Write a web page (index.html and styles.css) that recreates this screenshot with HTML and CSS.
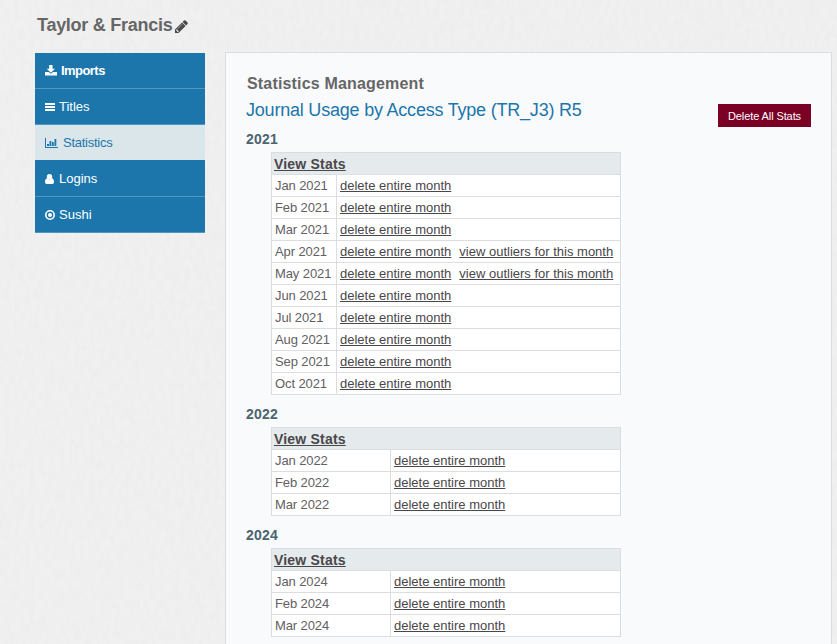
FILE: index.html
```html
<!DOCTYPE html>
<html lang="en">
<head>
<meta charset="utf-8">
<title>Taylor &amp; Francis</title>
<link rel="stylesheet" href="styles.css">
</head>
<body>
<svg class="paper" width="837" height="644" aria-hidden="true">
  <filter id="grain" x="0" y="0" width="100%" height="100%">
    <feTurbulence type="fractalNoise" baseFrequency="0.2 0.1" numOctaves="3" seed="4"/>
    <feColorMatrix values="0 0 0 0 .45  0 0 0 0 .45  0 0 0 0 .45  .1 0 0 0 -.035"/>
  </filter>
  <rect width="837" height="644" filter="url(#grain)"/>
</svg>
<div class="page">
  <h1 class="title"><span>Taylor &amp; Francis</span>
    <svg class="pencil" viewBox="0 -1408 1536 1536"><path transform="scale(1,-1)" d="M363 0l91 91l-235 235l-91 -91v-107h128v-128h107zM886 928q0 22 -22 22q-10 0 -17 -7l-542 -542q-7 -7 -7 -17q0 -22 22 -22q10 0 17 7l542 542q7 7 7 17zM832 1120l416 -416l-832 -832h-416v416zM1515 1024q0 -53 -37 -90l-166 -166l-416 416l166 165q36 38 90 38q53 0 91 -38l235 -234q37 -39 37 -91z"/></svg>
  </h1>
  <div class="columns">
    <nav class="menu">
      <a class="item strong"><svg width="12" height="11" viewBox="0 0 12 11"><path d="M4.2 0h3.3v3.8H10L5.9 7.8 1.7 3.8h2.5zM0 7h3.5l2.4 1.7L8.2 7H12v3.5H0z"/></svg><span>Imports</span></a>
      <a class="item"><svg width="10" height="9" viewBox="0 0 10 9"><path d="M0 1h10v2H0zM0 4h10v2H0zM0 7h10v2H0z"/></svg><span>Titles</span></a>
      <a class="item current"><svg width="13" height="10" viewBox="0 0 13 10"><path d="M0 0h1v9h12v1H0zM2 6h2v2H2zM4.500 3h1.800v5H4.500zM7 4h1.800v4H7zM9.500 1h1.800v7H9.500z"/></svg><span>Statistics</span></a>
      <a class="item user"><svg width="9" height="10" viewBox="0 0 9 10"><circle cx="4.500" cy="2.700" r="2.700"/><path d="M2 4.300Q4.500 6.500 7 4.300 9 4.800 9 8.200 9 10 7.300 10H1.700Q0 10 0 8.200 0 4.800 2 4.300z"/></svg><span>Logins</span></a>
      <a class="item"><svg width="10" height="10" viewBox="0 0 10 10"><circle class="ring" cx="5" cy="5" r="4.2"/><circle cx="5" cy="5" r="2"/></svg><span>Sushi</span></a>
    </nav>
    <main class="panel">
      <div class="head">
        <div>
          <h2 class="heading">Statistics Management</h2>
          <h3 class="report">Journal Usage by Access Type (TR_J3) R5</h3>
        </div>
        <a class="delete-all">Delete All Stats</a>
      </div>
      <h4 class="year">2021</h4>
      <table class="stats">
        <colgroup><col class="tight"><col></colgroup>
        <tr><th colspan="2"><a>View Stats</a></th></tr>
        <tr><td>Jan 2021</td><td><a>delete entire month</a></td></tr>
        <tr><td>Feb 2021</td><td><a>delete entire month</a></td></tr>
        <tr><td>Mar 2021</td><td><a>delete entire month</a></td></tr>
        <tr><td>Apr 2021</td><td><a>delete entire month</a><a class="outliers">view outliers for this month</a></td></tr>
        <tr><td>May 2021</td><td><a>delete entire month</a><a class="outliers">view outliers for this month</a></td></tr>
        <tr><td>Jun 2021</td><td><a>delete entire month</a></td></tr>
        <tr><td>Jul 2021</td><td><a>delete entire month</a></td></tr>
        <tr><td>Aug 2021</td><td><a>delete entire month</a></td></tr>
        <tr><td>Sep 2021</td><td><a>delete entire month</a></td></tr>
        <tr><td>Oct 2021</td><td><a>delete entire month</a></td></tr>
      </table>
      <h4 class="year">2022</h4>
      <table class="stats">
        <colgroup><col class="wide"><col></colgroup>
        <tr><th colspan="2"><a>View Stats</a></th></tr>
        <tr><td>Jan 2022</td><td><a>delete entire month</a></td></tr>
        <tr><td>Feb 2022</td><td><a>delete entire month</a></td></tr>
        <tr><td>Mar 2022</td><td><a>delete entire month</a></td></tr>
      </table>
      <h4 class="year">2024</h4>
      <table class="stats">
        <colgroup><col class="wide"><col></colgroup>
        <tr><th colspan="2"><a>View Stats</a></th></tr>
        <tr><td>Jan 2024</td><td><a>delete entire month</a></td></tr>
        <tr><td>Feb 2024</td><td><a>delete entire month</a></td></tr>
        <tr><td>Mar 2024</td><td><a>delete entire month</a></td></tr>
      </table>
    </main>
  </div>
</div>
</body>
</html>
```
FILE: styles.css
```css
* { box-sizing: border-box; }
html { overflow: hidden; }
body {
  margin: 0;
  height: 644px;
  overflow: hidden;
  background: #f0f0f0;
  color: #626063;
  font: 13px "Liberation Sans", Arial, sans-serif;
}
h1, h2, h3, h4 { margin: 0; }
.paper { position: absolute; top: 0; left: 0; z-index: -1; }
.page { padding: 0 5px 0 35px; }
.title {
  display: flex;
  align-items: center;
  height: 53px;
  padding: 0 0 3px 2px;
  font-size: 18px;
  line-height: 20px;
  letter-spacing: -0.27px;
  color: #666;
}
.pencil { width: 13px; height: 13px; margin: 2px 0 0 3px; fill: #4a484b; }
.columns { display: flex; align-items: flex-start; gap: 20px; }
.menu { width: 170px; flex: none; }
.item {
  display: flex;
  align-items: center;
  gap: 4px;
  height: 36px;
  padding-left: 10px;
  border-bottom: 1px solid #5096be;
  background: #1c76ab;
  color: #fff;
}
.item svg { fill: currentColor; flex: none; }
.item .ring { fill: none; stroke: currentColor; stroke-width: 1.6; }
.strong { font-weight: bold; letter-spacing: -0.55px; }
.user { gap: 5px; }
.current { gap: 5px; background: #dae6ea; color: #1c76ab; border-bottom-color: #1c76ab; letter-spacing: -0.25px; }
.panel {
  width: 607px;
  flex: none;
  height: 620px;
  margin-top: -1px;
  padding: 19px 20px 0;
  border: 1px solid #dcdde0;
  background: #f9fafc;
}
.head { display: flex; justify-content: space-between; height: 55px; }
.heading { padding-left: 1px; font-size: 16px; line-height: 24px; letter-spacing: 0.17px; color: #666; }
.report { font-size: 18px; line-height: 28px; font-weight: normal; letter-spacing: -0.21px; color: #1c76ab; }
.delete-all {
  width: 93px;
  height: 23px;
  margin-top: 32px;
  background: #7a0026;
  color: #fff;
  font-size: 11px;
  line-height: 25px;
  letter-spacing: -0.1px;
  text-align: center;
}
.year { height: 25px; font-size: 14px; line-height: 24px; letter-spacing: 0.2px; color: #4c646f; }
.stats {
  width: 350px;
  margin: 0 0 7px 25px;
  table-layout: fixed;
  border-collapse: collapse;
  background: #fff;
}
.tight { width: 65px; }
.wide { width: 119px; }
.stats td, .stats th { height: 22px; padding: 0 3px; border: 1px solid #dcdde0; line-height: 21px; text-align: left; white-space: nowrap; }
.stats td:first-child { letter-spacing: -0.1px; }
.stats th { padding: 1px 2px 0; background: #e5eaed; font-size: 14px; line-height: 20px; letter-spacing: 0.2px; }
.stats a { color: #49474a; text-decoration: underline; }
.stats .outliers { margin-left: 8px; }
```
